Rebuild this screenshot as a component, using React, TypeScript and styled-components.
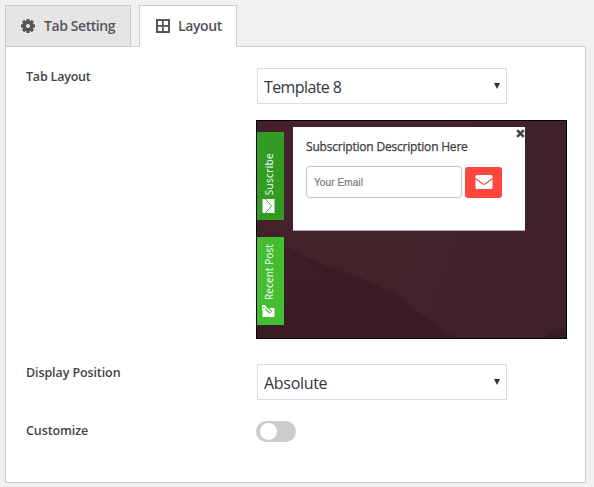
import React from "react";
import styled, { createGlobalStyle } from "styled-components";

const GlobalStyle = createGlobalStyle`
  *, *::before, *::after { box-sizing: border-box; }
  body {
    margin: 0;
    background: #f1f1f1;
    color: #444;
    font-family: "Open Sans", "Noto Sans", sans-serif;
    overflow: hidden;
  }
`;

const Page = styled.main`
  width: 594px;
  height: 487px;
  padding: 5px 8px 4px 5px;
  display: flex;
  flex-direction: column;
`;

const Tabs = styled.nav`
  display: flex;
  gap: 8px;
  height: 42px;
  position: relative;
  z-index: 1;
`;

const Tab = styled.button<{ $active?: boolean; $width: number; $gap: number }>`
  width: ${(p) => p.$width}px;
  height: 42px;
  margin: 0;
  padding: 0 0 0 ${(p) => (p.$active ? 16 : 15)}px;
  display: flex;
  align-items: center;
  gap: ${(p) => p.$gap}px;
  border: 1px solid #ccc;
  border-bottom-color: ${(p) => (p.$active ? "#fff" : "#ccc")};
  background: ${(p) => (p.$active ? "#fff" : "#e5e5e5")};
  color: #555;
  font: 600 14px/20px "Open Sans", sans-serif;
  white-space: nowrap;
`;

const TabText = styled.span<{ $spacing: number }>`
  letter-spacing: ${(p) => p.$spacing}px;
`;

const Panel = styled.section`
  width: 581px;
  height: 437px;
  margin-top: -1px;
  padding: 21px 0 0 20px;
  border: 1px solid #ccc;
  background: #fff;
`;

const Row = styled.div<{ $height: number }>`
  display: grid;
  grid-template-columns: 230px 311px;
  align-items: start;
  height: ${(p) => p.$height}px;
`;

const Label = styled.label<{ $spacing: number; $drop?: number }>`
  margin-top: ${(p) => p.$drop ?? 0}px;
  font-size: 12.5px;
  line-height: 18px;
  font-weight: 600;
  letter-spacing: ${(p) => p.$spacing}px;
`;

const Select = styled.div`
  width: 250px;
  height: 36px;
  margin-left: 1px;
  padding: 2px 6px 0 6px;
  display: flex;
  align-items: center;
  justify-content: space-between;
  border: 1px solid #ddd;
  color: #32373c;
  font-size: 16px;
  line-height: 22px;
`;

const SelectText = styled.span<{ $spacing: number }>`
  letter-spacing: ${(p) => p.$spacing}px;
`;

const Arrow = styled.svg`
  margin-top: -3px;
`;

const Preview = styled.div`
  position: relative;
  width: 311px;
  height: 219px;
  display: flex;
  align-items: flex-start;
  gap: 9px;
  border: 1px solid #000;
  background: #40222b;
`;

const Backdrop = styled.svg`
  position: absolute;
  inset: 0;
`;

const SideTabs = styled.div`
  position: relative;
  width: 27px;
  padding-top: 11px;
  display: flex;
  flex-direction: column;
  gap: 17px;
`;

const SideTab = styled.div<{ $color: string }>`
  width: 27px;
  height: 88px;
  padding: 0 4px 6px 0;
  display: flex;
  flex-direction: column-reverse;
  align-items: center;
  gap: 3px;
  background: ${(p) => p.$color};
  color: #fff;
`;

const SideText = styled.span<{ $spacing: number }>`
  writing-mode: vertical-rl;
  transform: rotate(180deg);
  font: 500 10px/14px "Open Sans", sans-serif;
  letter-spacing: ${(p) => p.$spacing}px;
  white-space: nowrap;
`;

const Popup = styled.div`
  position: relative;
  width: 232px;
  height: 104px;
  margin-top: 6px;
  padding: 11px 0 0 13px;
  background: #fff;
  border-bottom: 1px solid #b5aaac;
`;

const Heading = styled.div`
  color: #3c3c3c;
  font: 12px/18px "Open Sans", sans-serif;
  -webkit-text-stroke: 0.25px #3c3c3c;
  letter-spacing: -0.2px;
  white-space: nowrap;
`;

const Form = styled.div`
  display: flex;
  gap: 3px;
  margin-top: 10px;
`;

const Email = styled.div`
  width: 156px;
  height: 32px;
  padding: 2px 0 0 7px;
  display: flex;
  align-items: center;
  border: 1px solid #c4c4c4;
  border-radius: 4px;
  color: #777;
  font: 10px/14px "Liberation Sans", sans-serif;
  letter-spacing: 0.1px;
  -webkit-text-stroke: 0.2px #777;
`;

const Send = styled.div`
  width: 37px;
  height: 31px;
  margin-top: 1px;
  padding-bottom: 2px;
  display: flex;
  align-items: center;
  justify-content: center;
  border-radius: 3px;
  background: #fd463d;
`;

const Close = styled.svg`
  position: absolute;
  top: 2px;
  right: 0;
`;

const Toggle = styled.div`
  width: 40px;
  height: 21px;
  padding: 2px 4px;
  border-radius: 11px;
  background: #ccc;
`;

const Knob = styled.div`
  width: 17px;
  height: 17px;
  border-radius: 50%;
  background: #fff;
`;

const GearIcon = () => (
  <svg width="14" height="14" viewBox="0 0 14 14">
    <g fill="#555">
      {[0, 45, 90, 135].map((a) => (
        <rect key={a} x="5.3" y="0" width="3.4" height="14" rx="0.7" transform={`rotate(${a} 7 7)`} />
      ))}
      <circle cx="7" cy="7" r="5.3" />
    </g>
    <circle cx="7" cy="7" r="2.1" fill="#e5e5e5" />
  </svg>
);

const GridIcon = () => (
  <svg width="14" height="14" viewBox="0 0 14 14" fill="#555">
    <path fillRule="evenodd" d="M0 0h14v14H0zM2 2v4h4V2zM7.7 2v4h4.3V2zM2 7.7v4.3h4V7.7zM7.7 7.7v4.3h4.3V7.7z" />
  </svg>
);

const DropArrow = () => (
  <Arrow width="6" height="6" viewBox="0 0 6 6">
    <path d="M0 0h6L3 6z" fill="#333" />
  </Arrow>
);

export default function App() {
  return (
    <>
      <GlobalStyle />
      <Page>
        <Tabs>
          <Tab $width={126} $gap={9}>
            <GearIcon />
            <TabText $spacing={-0.42}>Tab Setting</TabText>
          </Tab>
          <Tab $active $width={98} $gap={8}>
            <GridIcon />
            <TabText $spacing={-0.4}>Layout</TabText>
          </Tab>
        </Tabs>
        <Panel>
          <Row $height={52}>
            <Label $spacing={-0.2}>Tab Layout</Label>
            <Select>
              <SelectText $spacing={-0.6}>Template 8</SelectText>
              <DropArrow />
            </Select>
          </Row>
          <Row $height={244}>
            <span />
            <Preview>
              <Backdrop width="309" height="217" viewBox="0 0 309 217">
                <defs>
                  <linearGradient id="sky" x1="0" y1="0" x2="1" y2="0.3">
                    <stop offset="0" stopColor="#44212a" />
                    <stop offset="0.55" stopColor="#43232a" />
                    <stop offset="1" stopColor="#3e202b" />
                  </linearGradient>
                  <linearGradient id="hill" x1="0" y1="0" x2="0" y2="1">
                    <stop offset="0" stopColor="#3d1d28" />
                    <stop offset="1" stopColor="#391c28" />
                  </linearGradient>
                </defs>
                <rect width="309" height="217" fill="url(#sky)" />
                <path d="M0 112L29 126L66 143L105 157L141 173L160 190L178 203L200 217H0z" fill="url(#hill)" />
                <path d="M29 126L70 147L110 161L146 180L168 200L151 191L124 180L92 169z" fill="#351a25" opacity=".3" />
                <path d="M286 217L296 211L309 209V217z" fill="#351b28" />
              </Backdrop>
              <SideTabs>
                <SideTab $color="#319b22">
                  <svg width="13" height="16" viewBox="0 0 13 16">
                    <path d="M0.5 1h12v14H0.5z" fill="#fff" />
                    <path d="M2.5 0L9.5 8L2.5 16" fill="none" stroke="#319b22" strokeWidth="0.9" />
                  </svg>
                  <SideText $spacing={0.35}>Suscribe</SideText>
                </SideTab>
                <SideTab $color="#44bd32">
                  <svg width="13" height="16" viewBox="0 0 13 16">
                    <path d="M0.5 5h12v9H0.5z" fill="#fff" />
                    <path d="M8.7 9.5L4 4.5" fill="none" stroke="#44bd32" strokeWidth="4" />
                    <path d="M8.5 9L2 3M0.2 6V2.8H3.5" fill="none" stroke="#fff" strokeWidth="1.7" />
                  </svg>
                  <SideText $spacing={0.1}>Recent Post</SideText>
                </SideTab>
              </SideTabs>
              <Popup>
                <Heading>Subscription Description Here</Heading>
                <Form>
                  <Email>Your Email</Email>
                  <Send>
                    <svg width="18" height="14" viewBox="0 0 18 14">
                      <rect x="0.5" width="17" height="14" rx="1.5" fill="#fff" />
                      <path d="M0.5 3.5L7.5 8.8Q9 9.8 10.5 8.8L17.5 3.5" fill="none" stroke="#fd463d" strokeWidth="1.1" />
                    </svg>
                  </Send>
                </Form>
                <Close width="9" height="9" viewBox="0 0 9 9">
                  <path d="M1.2 1.2L7.8 7.8M7.8 1.2L1.2 7.8" stroke="#444" strokeWidth="2.6" />
                </Close>
              </Popup>
            </Preview>
          </Row>
          <Row $height={57}>
            <Label $spacing={-0.1}>Display Position</Label>
            <Select>
              <SelectText $spacing={-0.3}>Absolute</SelectText>
              <DropArrow />
            </Select>
          </Row>
          <Row $height={30}>
            <Label $spacing={-0.1} $drop={1}>Customize</Label>
            <Toggle>
              <Knob />
            </Toggle>
          </Row>
        </Panel>
      </Page>
    </>
  );
}
